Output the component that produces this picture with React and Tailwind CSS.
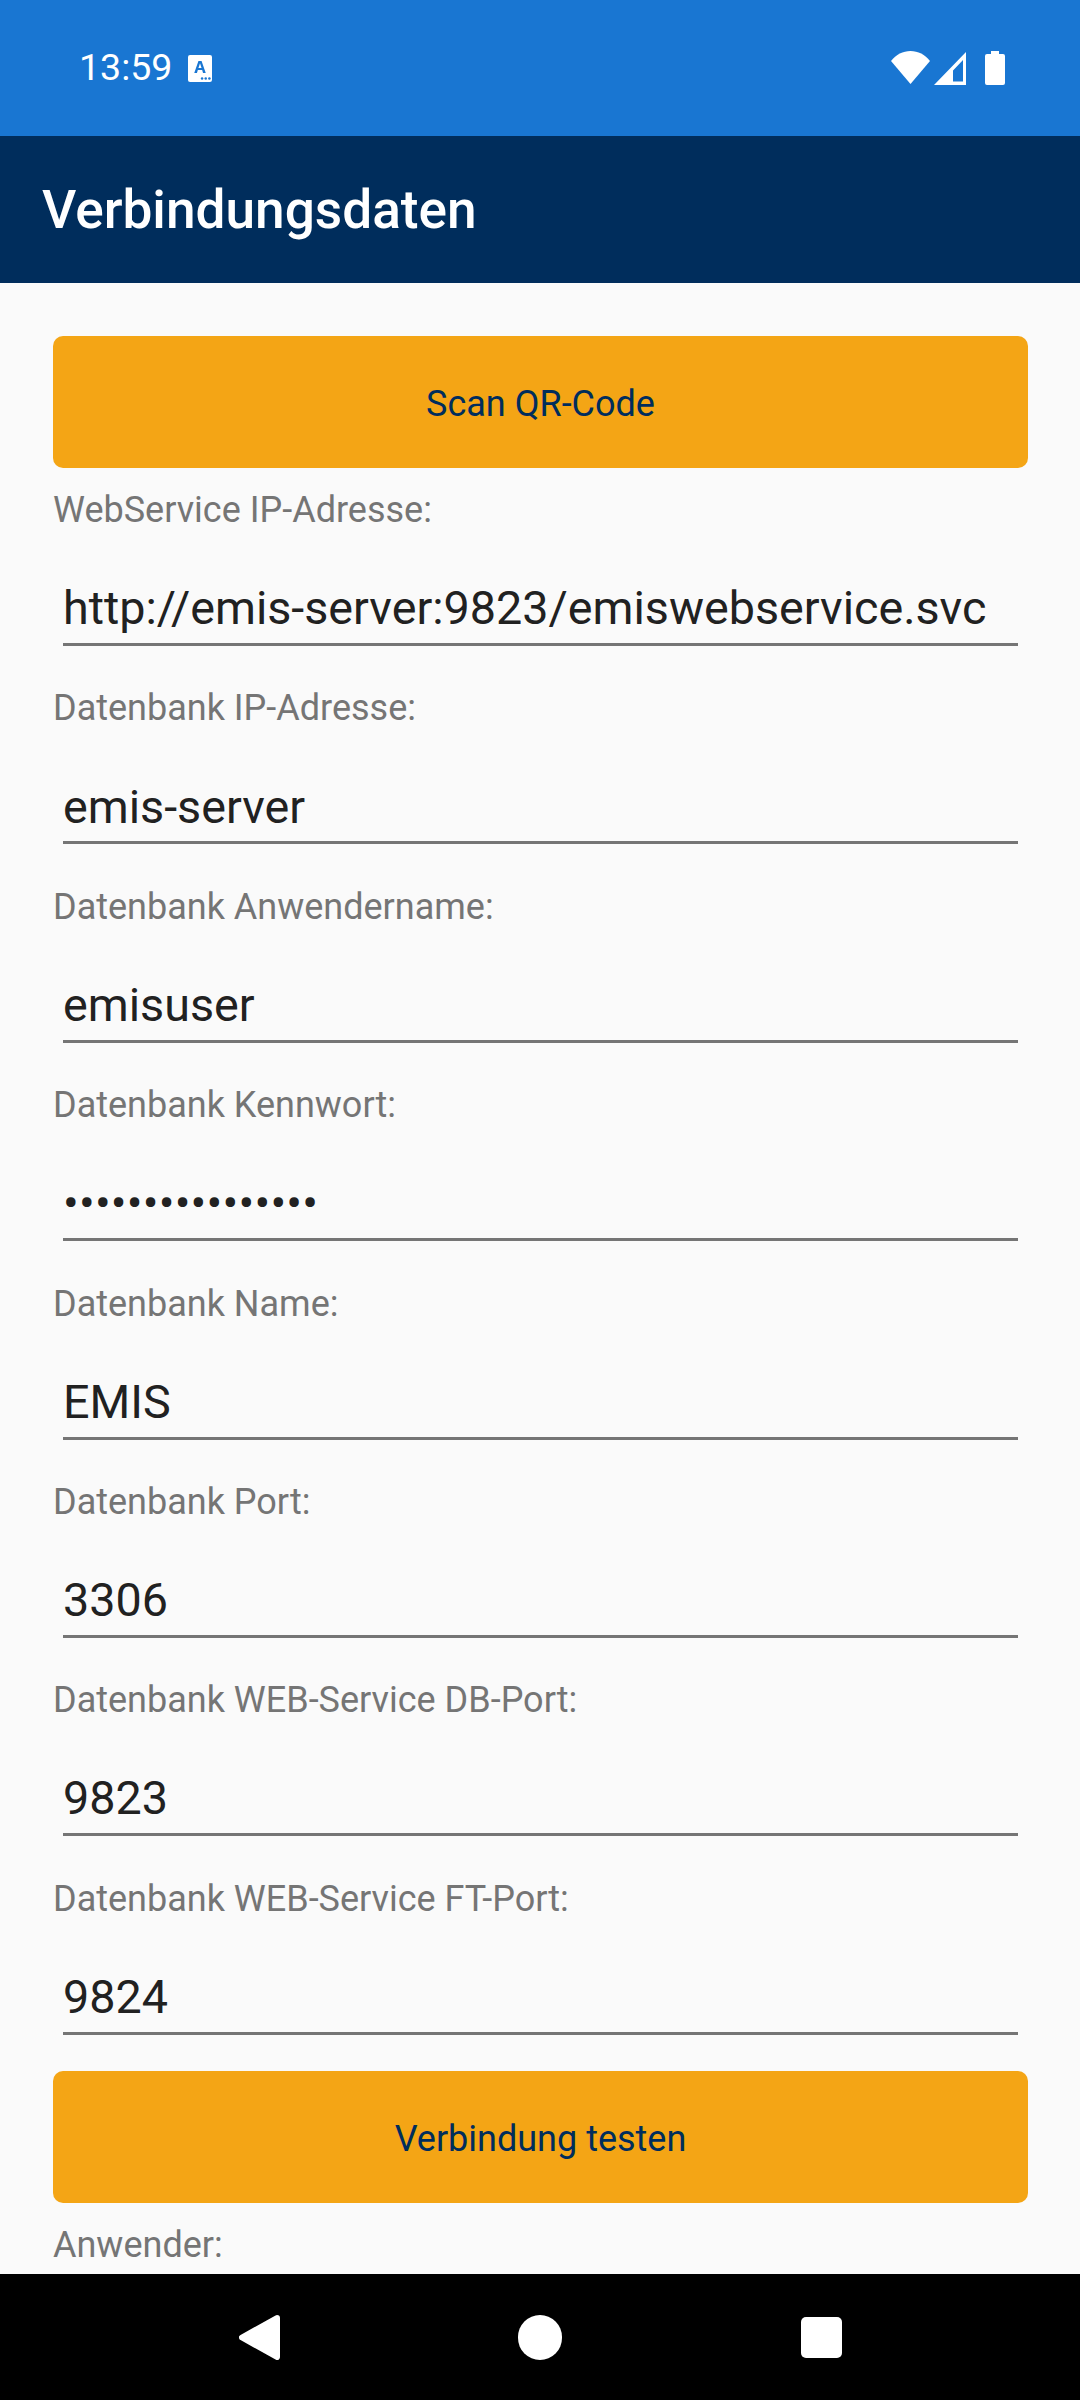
const fields = [
  { label: "WebService IP-Adresse:", value: "http://emis-server:9823/emiswebservice.svc" },
  { label: "Datenbank IP-Adresse:", value: "emis-server" },
  { label: "Datenbank Anwendername:", value: "emisuser" },
  { label: "Datenbank Kennwort:", value: "••••••••••••••••", masked: true },
  { label: "Datenbank Name:", value: "EMIS" },
  { label: "Datenbank Port:", value: "3306" },
  { label: "Datenbank WEB-Service DB-Port:", value: "9823" },
  { label: "Datenbank WEB-Service FT-Port:", value: "9824" },
];

function StatusBar() {
  return (
    <div className="h-[136px] shrink-0 bg-[#1976d2] flex items-center pl-[79px] pr-[75px] text-white">
      <span className="text-[37.5px] leading-none">13:59</span>
      {/* translate notification */}
      <svg className="ml-[16px]" width="24" height="27" viewBox="0 0 23 27" preserveAspectRatio="none">
        <rect width="23" height="27" rx="2" fill="#fff" />
        <path d="M6 18 L10 6 H13 L17 18 H14.4 L13.6 15 H9.4 L8.6 18 Z M10 13 H13 L11.5 8.2 Z" fill="#1976d2" fillRule="evenodd" />
        <circle cx="13.5" cy="23.5" r="1.2" fill="#1976d2" />
        <circle cx="17" cy="23.5" r="1.2" fill="#1976d2" />
        <circle cx="20.5" cy="23.5" r="1.2" fill="#1976d2" />
      </svg>
      <div className="ml-auto flex items-start">
        <svg width="39" height="33" viewBox="0 0 39 33">
          <path d="M0 10 C5 3.5 12 0 19.5 0 C27 0 34 3.5 39 10 L19.5 33 Z" fill="#fff" />
        </svg>
        <svg className="ml-[4px] mt-[1px]" width="32" height="33" viewBox="0 0 32 33">
          <path d="M32 0 V33 H0 Z M29 8 L19 18.5 V29.5 H29 Z" fill="#fff" fillRule="evenodd" />
        </svg>
        <svg className="ml-[19px]" width="20" height="34" viewBox="0 0 20 34">
          <path d="M6 0 H14 V3 H18 A2 2 0 0 1 20 5 V32 A2 2 0 0 1 18 34 H2 A2 2 0 0 1 0 32 V5 A2 2 0 0 1 2 3 H6 Z" fill="#fff" />
        </svg>
      </div>
    </div>
  );
}

function ActionButton({ children }) {
  return (
    <div className="h-[132px] ml-[53px] mr-[52px] pt-[4px] rounded-[10px] bg-[#f4a515] flex items-center justify-center text-[36px] text-[#002d5c]">
      {children}
    </div>
  );
}

function Field({ label, value, masked }) {
  return (
    <div className="h-[198.4px] pl-[53px] pr-[52px] flex flex-col">
      <div className="h-[80px] pt-[21px] text-[36px] leading-[42px] text-[#757575]">{label}</div>
      <div className={`mx-[10px] h-[98px] pt-[26px] flex items-center border-b-[3px] border-[#757575] text-[46.7px] leading-none text-[#212121] ${masked ? "tracking-[0.2px]" : ""}`}>
        {value}
      </div>
    </div>
  );
}

function NavBar() {
  return (
    <div className="h-[126px] shrink-0 bg-black flex items-center justify-center">
      <svg width="41" height="45" viewBox="0 0 41 45" className="mr-[238px]">
        <polygon points="38,3 3,22.5 38,42" fill="#fff" stroke="#fff" strokeWidth="6" strokeLinejoin="round" />
      </svg>
      <div className="w-[44px] h-[45px] rounded-full bg-white" />
      <div className="ml-[239px] w-[41px] h-[41px] rounded-[5px] bg-white" />
    </div>
  );
}

export default function App() {
  return (
    <div className="w-[1080px] h-[2400px] flex flex-col overflow-hidden bg-[#fafafa] font-['Roboto',sans-serif]">
      <StatusBar />
      <div className="h-[147px] shrink-0 bg-[#002d5c] flex items-center pl-[42px] pt-[3px] text-[53.2px] font-medium text-white">
        Verbindungsdaten
      </div>
      <div className="flex-1 min-h-0 overflow-hidden pt-[53px]">
        <ActionButton>Scan QR-Code</ActionButton>
        {fields.map((f) => (
          <Field key={f.label} label={f.label} value={f.value} masked={f.masked} />
        ))}
        <div className="mt-[16px]">
          <ActionButton>Verbindung testen</ActionButton>
        </div>
        <div className="pl-[53px] pt-[21px] text-[36px] leading-[42px] text-[#757575]">Anwender:</div>
      </div>
      <NavBar />
    </div>
  );
}
